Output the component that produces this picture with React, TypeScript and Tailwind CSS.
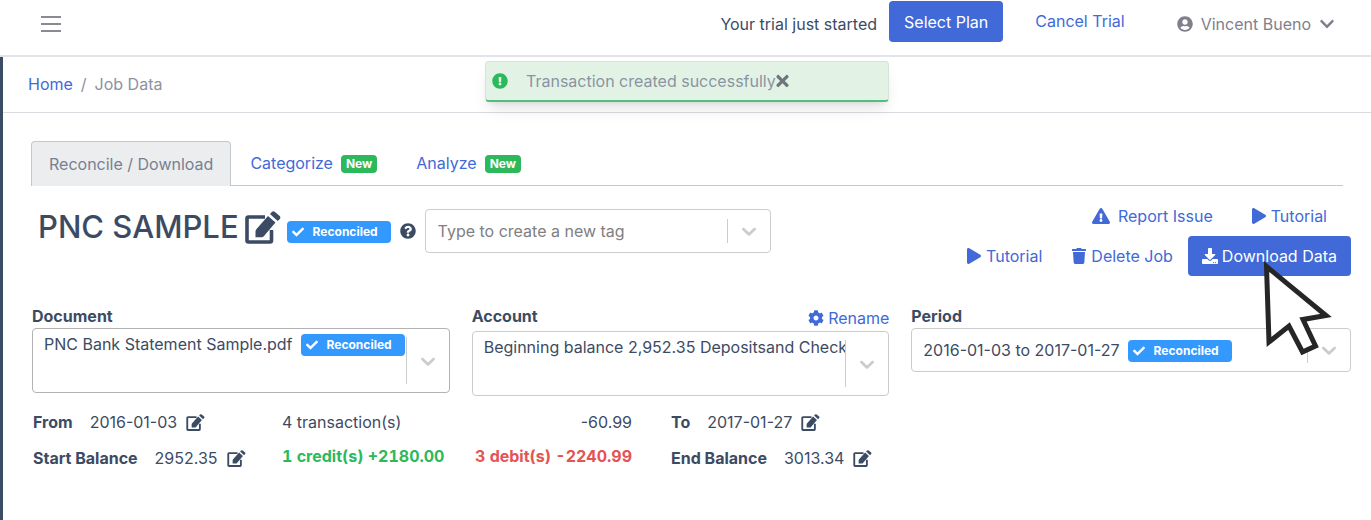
import type { ReactNode } from 'react';
import {
  FaCheck,
  FaChevronDown,
  FaCog,
  FaDownload,
  FaExclamationCircle,
  FaExclamationTriangle,
  FaPlay,
  FaQuestionCircle,
  FaTimes,
  FaTrash,
  FaUserCircle,
} from 'react-icons/fa';

function EditIcon({ className }: { className: string }) {
  return (
    <svg viewBox="0 0 36 33" className={className} aria-hidden="true">
      <path d="M20 6H3.500Q2 6 2 7.500V29.500Q2 31 3.500 31H25Q26.500 31 26.500 29.500V19" fill="none" stroke="currentColor" strokeWidth="3.600" />
      <path d="M23 5L30.500 11.500L19 25Q18 26.200 16.500 26.200H10.500V20.500Q10.500 19 11.500 18Z" fill="currentColor" />
      <path d="M25 3L26.800 1Q28.300-.3 30 1L34.700 5Q36 6.500 34.800 8L32.700 10Z" fill="currentColor" />
    </svg>
  );
}

function Chevron() {
  return (
    <svg viewBox="0 0 20 20" className="size-6 fill-[#cccccc]" aria-hidden="true">
      <path d="M4.516 7.548c0.436-0.446 1.043-0.481 1.576 0l3.908 3.747 3.908-3.747c0.533-0.481 1.141-0.446 1.574 0 0.436 0.445 0.408 1.197 0 1.615-0.406 0.418-4.695 4.502-4.695 4.502-0.217 0.223-0.502 0.335-0.787 0.335s-0.570-0.112-0.789-0.335c0 0-4.287-4.084-4.695-4.502s-0.436-1.170 0-1.615z" />
    </svg>
  );
}

function Reconciled() {
  return (
    <span className="flex h-[22px] w-[104px] shrink-0 items-center gap-[9px] rounded bg-[#3399ff] pl-[5px] text-xs font-bold text-white">
      <FaCheck className="size-3" />
      Reconciled
    </span>
  );
}

function NewBadge() {
  return <span className="mt-[2px] rounded bg-[#2eb85c] px-[5px] text-xs leading-[18px] font-bold text-white">New</span>;
}

function SelectBox({ id, value, badge, tall, dark }: { id: string; value: string; badge?: boolean; tall?: boolean; dark?: boolean }) {
  return (
    <div className={`flex rounded border bg-white pl-[11px] ${tall ? 'h-[65px]' : 'h-11'} ${dark ? 'border-[#b3b3b3]' : 'border-[#cccccc]'}`}>
      <div className={`flex min-w-0 flex-1 gap-2 overflow-hidden ${tall ? 'items-start pt-[3px]' : 'items-center'}`}>
        <select id={id} className="shrink-0 appearance-none bg-transparent text-base leading-6 outline-none [field-sizing:content]">
          <option>{value}</option>
        </select>
        {badge && <span className="pt-[2px]"><Reconciled /></span>}
      </div>
      <span className="my-2 w-px bg-[#cccccc]" />
      <span className="flex w-[42px] items-center justify-center">
        <Chevron />
      </span>
    </div>
  );
}

function EditableValue({ label, value }: { label: string; value: string }) {
  return (
    <div className="flex items-center">
      <dt className="font-bold">{label}</dt>
      <dd className="ml-[17px] flex items-center gap-[9px]">
        {value}
        <button type="button" aria-label={`Edit ${label}`}>
          <EditIcon className="h-[17px] w-[19px]" />
        </button>
      </dd>
    </div>
  );
}

function LinkButton({ icon, children, className }: { icon: ReactNode; children: ReactNode; className?: string }) {
  return (
    <button type="button" className={`flex items-center text-[#4169d8] ${className ?? 'gap-1'}`}>
      {icon}
      {children}
    </button>
  );
}

export default function App() {
  return (
    <div className="flex min-h-screen flex-col bg-white font-['Inter','Liberation_Sans',sans-serif] text-base leading-6 text-[#3c4b64]">
      <header className="flex h-[57px] items-start border-b-2 border-[#e3e3ea] pr-9 pl-10">
        <button type="button" aria-label="Toggle menu" className="mt-[14px] text-[#8a8a96]">
          <svg viewBox="0 0 22 20" className="h-5 w-[22px]" aria-hidden="true">
            <path d="M1 3h20M1 10h20M1 17h20" stroke="currentColor" strokeWidth="2" />
          </svg>
        </button>
        <span className="mt-3 ml-auto">Your trial just started</span>
        <button type="button" className="mt-px ml-3 h-[41px] rounded bg-[#4169d8] px-[15px] text-white">Select Plan</button>
        <button type="button" className="mt-[9px] ml-8 text-[#4169d8]">Cancel Trial</button>
        <button type="button" className="mt-3 ml-[52px] flex items-center text-[#80808c]">
          <FaUserCircle className="mr-2 size-4" />
          Vincent Bueno
          <FaChevronDown className="ml-2 size-4" />
        </button>
      </header>

      <div className="flex-1 border-l-[3px] border-[#3c4b64]">
        <nav aria-label="Breadcrumb" className="relative flex h-14 items-center gap-2 border-b border-[#d8dbe0] pb-px pl-[25px]">
          <a href="#home" className="text-[#4169d8]">Home</a>
          <span className="text-[#8a93a2]">/</span>
          <span className="text-[#8a93a2]">Job Data</span>
          <div role="status" className="absolute top-1 left-[482px] flex h-[41px] w-[404px] items-center rounded border border-b-2 border-[#d5e4db] border-b-[#55bd7b] bg-[#e2f3e6] pl-[6px] text-[#8a93a2] shadow-lg">
            <FaExclamationCircle className="mr-[18px] size-4 text-[#2eb85c]" />
            Transaction created successfully
            <button type="button" aria-label="Close" className="text-[#70757c]">
              <FaTimes className="h-[18px] w-[13px]" />
            </button>
          </div>
        </nav>

        <main className="pt-7 pr-5 pl-7">
          <div role="tablist" className="mr-2 flex h-[45px] border-b border-[#c4c9d0]">
            <button type="button" role="tab" aria-selected="true" className="-mb-px rounded-t border border-b-0 border-[#c4c9d0] bg-[#ebedef] px-[17px] text-[#768192]">
              Reconcile / Download
            </button>
            <button type="button" role="tab" className="flex items-center gap-2 pl-[19px] text-[#4169d8]">
              Categorize <NewBadge />
            </button>
            <button type="button" role="tab" className="flex items-center gap-2 pl-[39px] text-[#4169d8]">
              Analyze <NewBadge />
            </button>
          </div>

          <div className="mt-[10px] flex items-start justify-between">
            <div className="mt-[13px] flex items-center pl-[7px]">
              <div className="flex items-center gap-[6px] pb-2">
                <h1 className="text-[31px] leading-9 font-medium">PNC SAMPLE</h1>
                <button type="button" aria-label="Rename job">
                  <EditIcon className="h-[33px] w-9" />
                </button>
              </div>
              <span className="ml-[6px] pt-[2px]"><Reconciled /></span>
              <FaQuestionCircle className="ml-[9px] size-4" />
              <div className="ml-[9px] flex h-11 w-[346px] items-center rounded border border-[#cccccc] pl-3">
                <input aria-label="Tags" placeholder="Type to create a new tag" className="min-w-0 flex-1 outline-none placeholder:text-[#808080]" />
                <span className="h-6 w-px bg-[#cccccc]" />
                <button type="button" aria-label="Open tag list" className="flex w-[42px] justify-center"><Chevron /></button>
              </div>
            </div>
            <div className="flex flex-col items-end">
              <div className="flex h-10 items-center gap-[38px] pr-6">
                <LinkButton icon={<FaExclamationTriangle className="size-[18px]" />} className="gap-2">Report Issue</LinkButton>
                <LinkButton icon={<FaPlay className="size-4" />}>Tutorial</LinkButton>
              </div>
              <div className="flex items-center">
                <LinkButton icon={<FaPlay className="size-4" />}>Tutorial</LinkButton>
                <LinkButton icon={<FaTrash className="size-4" />} className="ml-[29px] gap-1">Delete Job</LinkButton>
                <button type="button" className="ml-[15px] flex h-10 items-center gap-1 rounded bg-[#4169d8] px-[14px] text-white">
                  <FaDownload className="size-4" />
                  Download Data
                </button>
              </div>
            </div>
          </div>

          <div className="mt-7 grid grid-cols-[minmax(0,418fr)_minmax(0,418fr)_minmax(0,440fr)] gap-x-[22px] pl-px">
            <div>
              <label htmlFor="document" className="block font-bold">Document</label>
              <SelectBox id="document" value="PNC Bank Statement Sample.pdf" badge tall dark />
            </div>
            <div>
              <div className="flex h-[27px] justify-between">
                <label htmlFor="account" className="font-bold">Account</label>
                <LinkButton icon={<FaCog className="size-4" />}>Rename</LinkButton>
              </div>
              <SelectBox id="account" value="Beginning balance 2,952.35 Depositsand Checks and Other" tall />
            </div>
            <div>
              <label htmlFor="period" className="block font-bold">Period</label>
              <SelectBox id="period" value="2016-01-03 to 2017-01-27" badge />
            </div>
          </div>

          <div className="mt-[14px] flex pl-[2px]">
            <dl className="flex w-[249px] flex-col gap-3">
              <EditableValue label="From" value="2016-01-03" />
              <EditableValue label="Start Balance" value="2952.35" />
            </dl>
            <div className="flex w-[350px] flex-col gap-[10px]">
              <div className="flex justify-between"><span>4 transaction(s)</span><span>-60.99</span></div>
              <div className="flex justify-between font-bold tabular-nums">
                <span className="text-[#2eb85c]">1 credit(s) +2180.00</span>
                <span className="text-[#e55353]">3 debit(s) -2240.99</span>
              </div>
            </div>
            <dl className="ml-[39px] flex flex-col gap-3">
              <EditableValue label="To" value="2017-01-27" />
              <EditableValue label="End Balance" value="3013.34" />
            </dl>
          </div>
        </main>
      </div>

      <svg viewBox="0 0 70 96" className="pointer-events-none absolute top-[260px] left-[1263px] h-24 w-[70px]" aria-hidden="true">
        <path d="M3.500 6.500L63 55.500 40 59.500 52.500 86 39.500 92 26 66 6 82Z" fill="white" stroke="#262626" strokeWidth="5" />
      </svg>
    </div>
  );
}
